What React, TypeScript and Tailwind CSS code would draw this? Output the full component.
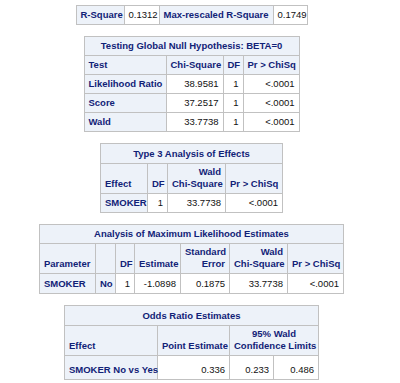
import React from "react";

const TH = "bg-[#edf2f9] text-[#112277] font-bold border border-[#c1c1c1] px-[4px] pb-[3px] align-bottom whitespace-nowrap leading-[12px]";
const TD = "bg-white text-[#111] border border-[#c1c1c1] px-[4px] pb-[3px] align-bottom whitespace-nowrap leading-[12px] text-right";

function Table({ widths, children }: { widths: number[]; children: React.ReactNode }) {
  const total = widths.reduce((a, b) => a + b, 0);
  return (
    <table className="border-collapse table-fixed border border-[#c1c1c1]" style={{ width: total }}>
      <colgroup>
        {widths.map((w, i) => (
          <col key={i} style={{ width: w }} />
        ))}
      </colgroup>
      <tbody>{children}</tbody>
    </table>
  );
}

export default function App() {
  return (
    <div className="w-[400px] h-[383px] bg-white overflow-hidden font-['Liberation_Sans',Arial,sans-serif] text-[9.5px]">
      <div className="w-[383px] flex flex-col items-center pt-[5px] gap-[11px]">
        <Table widths={[48, 35, 114, 34]}>
          <tr className="h-[19px]">
            <th className={TH + " text-left"}>R-Square</th>
            <td className={TD}>0.1312</td>
            <th className={TH + " text-left"}>Max-rescaled R-Square</th>
            <td className={TD}>0.1749</td>
          </tr>
        </Table>

        <Table widths={[82, 57, 20, 56]}>
          <tr className="h-[19px]">
            <th colSpan={4} className={TH + " text-center"}>Testing Global Null Hypothesis: BETA=0</th>
          </tr>
          <tr className="h-[19px]">
            <th className={TH + " text-left"}>Test</th>
            <th className={TH + " text-right"}>Chi-Square</th>
            <th className={TH + " text-right"}>DF</th>
            <th className={TH + " text-right"}>Pr &gt; ChiSq</th>
          </tr>
          {[
            ["Likelihood Ratio", "38.9581"],
            ["Score", "37.2517"],
            ["Wald", "33.7738"],
          ].map(([t, c]) => (
            <tr key={t} className="h-[19px]">
              <th className={TH + " text-left"}>{t}</th>
              <td className={TD}>{c}</td>
              <td className={TD}>1</td>
              <td className={TD}>&lt;.0001</td>
            </tr>
          ))}
        </Table>

        <Table widths={[47, 20, 58, 57]}>
          <tr className="h-[20px]">
            <th colSpan={4} className={TH + " text-center"}>Type 3 Analysis of Effects</th>
          </tr>
          <tr className="h-[30px]">
            <th className={TH + " text-left"}>Effect</th>
            <th className={TH + " text-right"}>DF</th>
            <th className={TH + " text-right"}>
              Wald
              <br />
              Chi-Square
            </th>
            <th className={TH + " text-right"}>Pr &gt; ChiSq</th>
          </tr>
          <tr className="h-[19px]">
            <th className={TH + " text-left"}>SMOKER</th>
            <td className={TD}>1</td>
            <td className={TD}>33.7738</td>
            <td className={TD}>&lt;.0001</td>
          </tr>
        </Table>

        <Table widths={[56, 20, 19, 46, 49, 58, 56]}>
          <tr className="h-[19px]">
            <th colSpan={7} className={TH + " text-center"}>Analysis of Maximum Likelihood Estimates</th>
          </tr>
          <tr className="h-[30px]">
            <th className={TH + " text-left"}>Parameter</th>
            <th className={TH}></th>
            <th className={TH + " text-right"}>DF</th>
            <th className={TH + " text-right"}>Estimate</th>
            <th className={TH + " text-right"}>
              Standard
              <br />
              Error
            </th>
            <th className={TH + " text-right"}>
              Wald
              <br />
              Chi-Square
            </th>
            <th className={TH + " text-right"}>Pr &gt; ChiSq</th>
          </tr>
          <tr className="h-[20px]">
            <th className={TH + " text-left"}>SMOKER</th>
            <th className={TH + " text-left"}>No</th>
            <td className={TD}>1</td>
            <td className={TD}>-1.0898</td>
            <td className={TD}>0.1875</td>
            <td className={TD}>33.7738</td>
            <td className={TD}>&lt;.0001</td>
          </tr>
        </Table>

        <Table widths={[93, 72, 44, 45]}>
          <tr className="h-[20px]">
            <th colSpan={4} className={TH + " text-center"}>Odds Ratio Estimates</th>
          </tr>
          <tr className="h-[30px]">
            <th className={TH + " text-left"}>Effect</th>
            <th className={TH + " text-right"}>Point Estimate</th>
            <th colSpan={2} className={TH + " text-center"}>
              95% Wald
              <br />
              Confidence Limits
            </th>
          </tr>
          <tr className="h-[24px]">
            <th className={TH + " text-left"}>SMOKER No vs Yes</th>
            <td className={TD}>0.336</td>
            <td className={TD}>0.233</td>
            <td className={TD}>0.486</td>
          </tr>
        </Table>
      </div>
    </div>
  );
}
